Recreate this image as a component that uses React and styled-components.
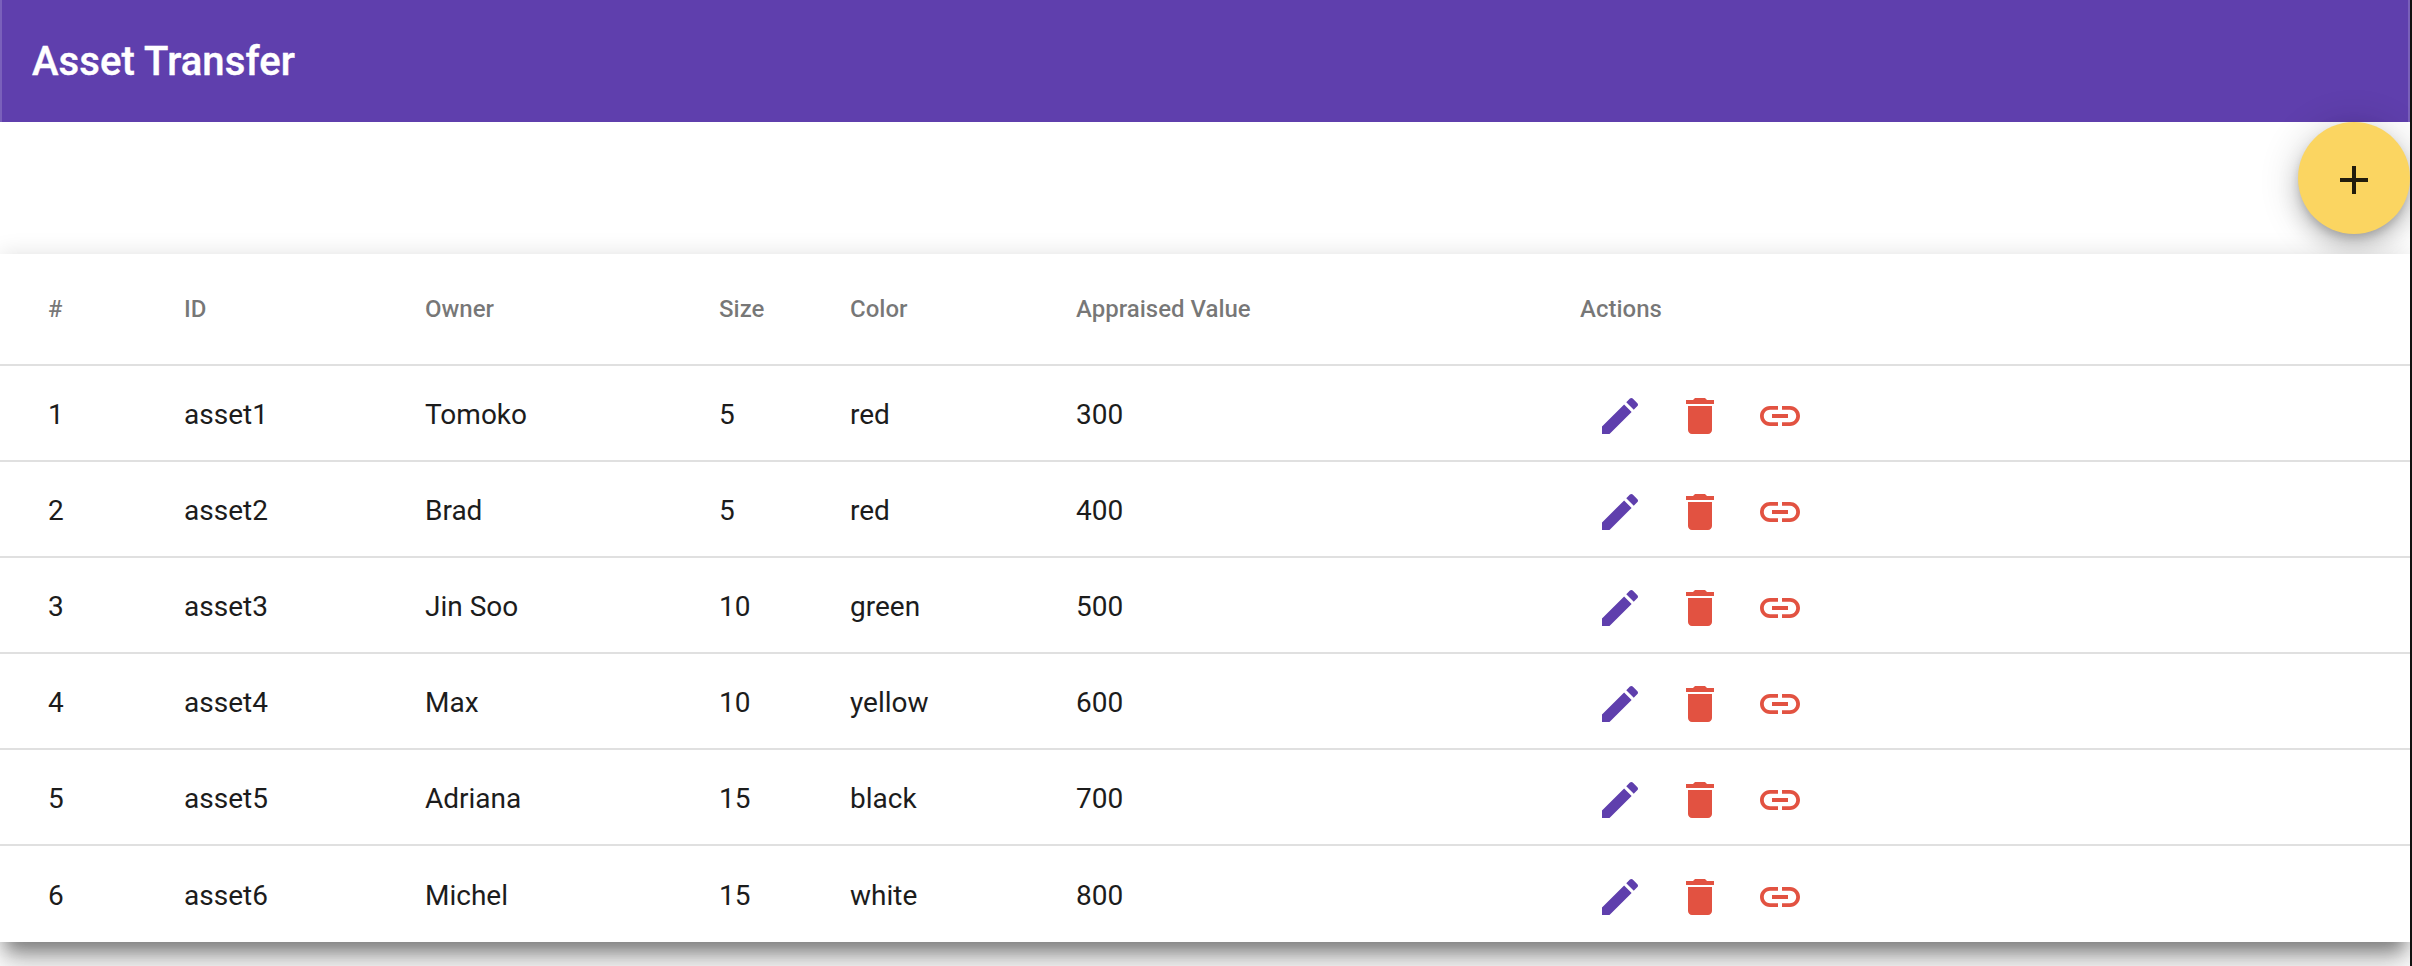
import styled, { createGlobalStyle } from "styled-components";

const GlobalStyle = createGlobalStyle`
  html, body {
    margin: 0;
    padding: 0;
    background: #fff;
    overflow: hidden;
  }
  body {
    font-family: Roboto, "Liberation Sans", sans-serif;
  }
`;

const Page = styled.div`
  width: 2412px;
  height: 966px;
  box-sizing: border-box;
  border-right: 2px solid #111;
  display: flex;
  flex-direction: column;
  overflow: hidden;
`;

const AppBar = styled.header`
  height: 122px;
  flex: none;
  box-sizing: border-box;
  display: flex;
  align-items: center;
  padding-left: 30px;
  border-left: 2px solid #7a60bb;
  border-right: 2px solid #7a60bb;
  background: #5f3fad;
  color: #fff;
`;

const Title = styled.h1`
  margin: 0;
  font-size: 40px;
  font-weight: 500;
  letter-spacing: 0.1px;
  -webkit-text-stroke: 0.4px #fff;
`;

const FabRow = styled.div`
  height: 132px;
  flex: none;
  display: flex;
  justify-content: flex-end;
  align-items: flex-start;
`;

const Fab = styled.button`
  width: 112px;
  height: 112px;
  box-sizing: border-box;
  padding: 4px 0 0;
  border: 0;
  border-radius: 50%;
  display: flex;
  align-items: center;
  justify-content: center;
  background: #fbd561;
  color: #211c0c;
  box-shadow: 0 6px 10px -2px rgba(0, 0, 0, 0.2), 0 12px 20px 2px rgba(0, 0, 0, 0.14), 0 4px 36px 6px rgba(0, 0, 0, 0.12);
`;

const Card = styled.div`
  flex: none;
  background: #fff;
  box-shadow: 0 16px 18px -6px rgba(0, 0, 0, 0.42), 0 30px 34px rgba(0, 0, 0, 0.12), 0 -2px 20px rgba(0, 0, 0, 0.1);
`;

const Table = styled.table`
  width: 100%;
  border-collapse: collapse;
  table-layout: fixed;
`;

const HeadCell = styled.th`
  height: 111px;
  padding: 0 0 0 ${(p) => (p.$first ? "48px" : "0")};
  box-sizing: border-box;
  text-align: left;
  font-size: 24px;
  font-weight: 500;
  color: rgba(0, 0, 0, 0.54);
  border-bottom: 2px solid #e0e0e0;
`;

const Cell = styled.td`
  height: ${(p) => (p.$last ? "97px" : "96px")};
  padding: 2px 0 0 ${(p) => (p.$first ? "48px" : "0")};
  box-sizing: border-box;
  font-size: 28px;
  color: #1c1c1c;
  border-bottom: ${(p) => (p.$last ? "0" : "2px solid #e0e0e0")};
`;

const Actions = styled.div`
  display: flex;
  align-items: center;
  padding-top: 4px;
`;

const IconButton = styled.button`
  width: 80px;
  height: 80px;
  padding: 0;
  border: 0;
  background: none;
  display: flex;
  align-items: center;
  justify-content: center;
  color: ${(p) => p.$color};
`;

const Icon = ({ d, size = 48 }) => (
  <svg width={size} height={size} viewBox="0 0 24 24" fill="currentColor">
    <path d={d} />
  </svg>
);

const EDIT = "M3 17.25V21h3.75L17.81 9.94l-3.75-3.75L3 17.25zM20.71 7.04c.39-.39.39-1.02 0-1.41l-2.34-2.34c-.39-.39-1.02-.39-1.41 0l-1.83 1.83 3.75 3.75 1.83-1.83z";
const DELETE = "M6 19c0 1.1.9 2 2 2h8c1.1 0 2-.9 2-2V7H6v12zM19 4h-3.5l-1-1h-5l-1 1H5v2h14V4z";
const LINK = "M3.9 12c0-1.71 1.39-3.1 3.1-3.1h4V7H7c-2.76 0-5 2.24-5 5s2.24 5 5 5h4v-1.9H7c-1.71 0-3.1-1.39-3.1-3.1zM8 13h8v-2H8v2zm9-6h-4v1.9h4c1.71 0 3.1 1.39 3.1 3.1s-1.39 3.1-3.1 3.1h-4V17h4c2.76 0 5-2.24 5-5s-2.24-5-5-5z";
const PLUS = "M19 13h-6v6h-2v-6H5v-2h6V5h2v6h6v2z";

const COLUMNS = [
  { label: "#", width: 184 },
  { label: "ID", width: 241 },
  { label: "Owner", width: 294 },
  { label: "Size", width: 131 },
  { label: "Color", width: 226 },
  { label: "Appraised Value", width: 504 },
  { label: "Actions" },
];

const ASSETS = [
  ["1", "asset1", "Tomoko", "5", "red", "300"],
  ["2", "asset2", "Brad", "5", "red", "400"],
  ["3", "asset3", "Jin Soo", "10", "green", "500"],
  ["4", "asset4", "Max", "10", "yellow", "600"],
  ["5", "asset5", "Adriana", "15", "black", "700"],
  ["6", "asset6", "Michel", "15", "white", "800"],
];

const App = () => {
  return (
    <Page>
      <GlobalStyle />
      <AppBar>
        <Title>Asset Transfer</Title>
      </AppBar>
      <FabRow>
        <Fab>
          <Icon d={PLUS} />
        </Fab>
      </FabRow>
      <Card>
        <Table>
          <colgroup>
            {COLUMNS.map((c) => (
              <col key={c.label} width={c.width} />
            ))}
          </colgroup>
          <thead>
            <tr>
              {COLUMNS.map((c, i) => (
                <HeadCell key={c.label} $first={i === 0}>
                  {c.label}
                </HeadCell>
              ))}
            </tr>
          </thead>
          <tbody>
            {ASSETS.map((row, r) => {
              const last = r === ASSETS.length - 1;
              return (
                <tr key={row[0]}>
                  {row.map((value, i) => (
                    <Cell key={i} $first={i === 0} $last={last}>
                      {value}
                    </Cell>
                  ))}
                  <Cell $last={last}>
                    <Actions>
                      <IconButton $color="#5f3fad">
                        <Icon d={EDIT} />
                      </IconButton>
                      <IconButton $color="#e25241">
                        <Icon d={DELETE} />
                      </IconButton>
                      <IconButton $color="#e25241">
                        <Icon d={LINK} />
                      </IconButton>
                    </Actions>
                  </Cell>
                </tr>
              );
            })}
          </tbody>
        </Table>
      </Card>
    </Page>
  );
};

export default App;
